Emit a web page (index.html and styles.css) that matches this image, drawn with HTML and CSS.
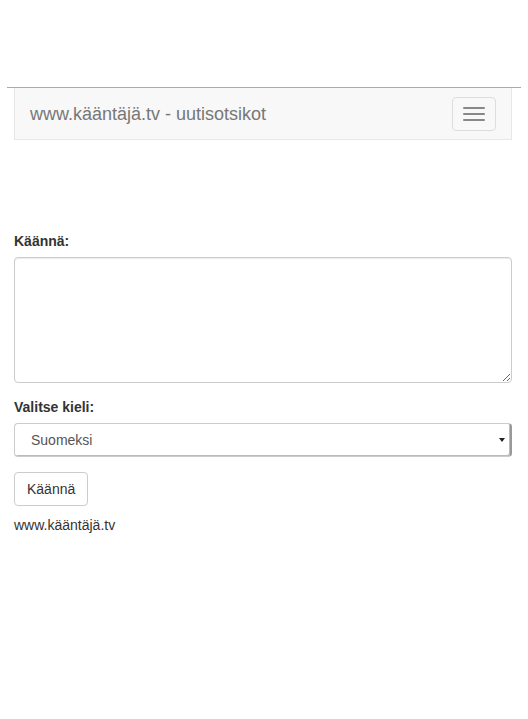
FILE: index.html
```html
<!DOCTYPE html>
<html lang="fi">
<head>
    <meta charset="UTF-8">
    <meta name="viewport" content="width=device-width, initial-scale=1.0">
    <title>www.kääntäjä.tv - uutisotsikot</title>
    <link rel="stylesheet" href="styles.css">
</head>
<body>
    <hr class="rule">
    <nav class="navbar">
        <a class="navbar-brand" href="#">www.kääntäjä.tv - uutisotsikot</a>
        <button class="navbar-toggle" type="button">
            <span class="icon-bar"></span>
            <span class="icon-bar"></span>
            <span class="icon-bar"></span>
        </button>
    </nav>

    <main class="content">
        <form class="translate-form">
            <div class="form-group">
                <label for="text">Käännä:</label>
                <textarea id="text" class="form-control"></textarea>
            </div>
            <div class="form-group">
                <label for="lang">Valitse kieli:</label>
                <select id="lang" class="form-control">
                    <option>Suomeksi</option>
                    <option>Englanniksi</option>
                    <option>Ruotsiksi</option>
                </select>
            </div>
            <button type="submit" class="btn">Käännä</button>
        </form>
        <p class="footer">www.kääntäjä.tv</p>
    </main>
</body>
</html>
```

FILE: styles.css
```css
* {
    box-sizing: border-box;
}
body {
    margin: 0;
    font-family: "Liberation Sans", Arial, sans-serif;
    font-size: 14px;
    line-height: 1.42857;
    color: #333;
    background-color: #fff;
}
.rule {
    margin: 87px 7px 0;
    border: 0;
    border-top: 1px solid #aaa;
    height: 0;
}
.navbar {
    margin: 0 16px 0 14px;
    height: 52px;
    display: flex;
    align-items: center;
    justify-content: space-between;
    background-color: #f8f8f8;
    border: 1px solid #e7e7e7;
    border-top: 0;
    padding: 0 15px;
}
.navbar-brand {
    font-size: 18px;
    line-height: 20px;
    color: #777;
    text-decoration: none;
}
.navbar-toggle {
    width: 44px;
    height: 34px;
    padding: 9px 10px;
    margin-top: 1px;
    background: transparent;
    border: 1px solid #ddd;
    border-radius: 4px;
    display: flex;
    flex-direction: column;
    justify-content: center;
    gap: 4px;
}
.icon-bar {
    display: block;
    width: 22px;
    height: 2px;
    border-radius: 1px;
    background-color: #888;
}
.content {
    padding: 92px 16px 0 14px;
}
.form-group {
    margin-bottom: 15px;
}
label {
    display: block;
    font-weight: bold;
    margin-bottom: 5px;
}
.form-control {
    display: block;
    width: 100%;
    font-family: inherit;
    font-size: 14px;
    color: #555;
    background-color: #fff;
    border: 1px solid #ccc;
    border-radius: 4px;
    box-shadow: inset 0 1px 1px rgba(0, 0, 0, 0.075);
}
textarea.form-control {
    height: 126px;
    padding: 6px 12px;
}
select.form-control {
    -webkit-appearance: none;
    appearance: none;
    height: 34px;
    padding: 6px 16px;
    border-right-color: #999;
    border-right-width: 2px;
    background-image: url("data:image/svg+xml,%3Csvg xmlns='http://www.w3.org/2000/svg' width='6' height='4'%3E%3Cpath d='M0 0h6L3 4z' fill='%23222'/%3E%3C/svg%3E");
    background-repeat: no-repeat;
    background-position: right 5px center;
    box-shadow: inset -1px -1px 0 #bbb;
}
.btn {
    font-family: inherit;
    font-size: 14px;
    line-height: 20px;
    color: #333;
    background-color: #fff;
    border: 1px solid #ccc;
    border-radius: 4px;
    padding: 6px 12px;
}
.footer {
    margin: 10px 0 0;
}
```
